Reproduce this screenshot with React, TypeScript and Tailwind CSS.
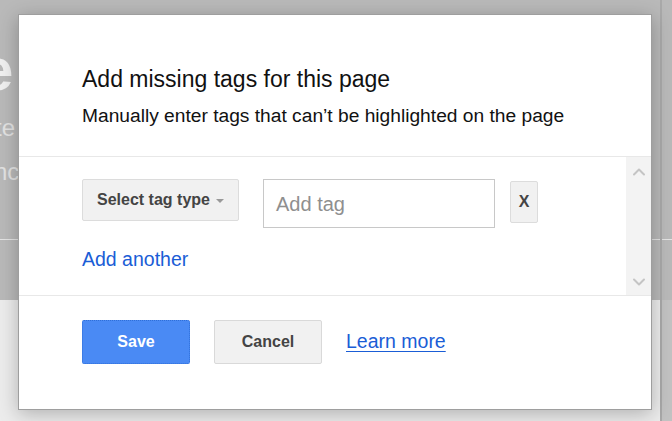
import { ChevronUp, ChevronDown } from 'lucide-react';

const font = { fontFamily: '"Liberation Sans", Arial, sans-serif' };

// 背景页面（被遮罩）
const BackdropPage = () => (
  <div className="absolute inset-0 flex flex-col">
    <div className="h-[300px] bg-[#b9b9b9] flex flex-col">
      <div className="h-[240px] border-b border-[#e4e4e4] pt-[40px]">
        <div className="text-[60px] leading-[60px] font-bold text-[#f0f0f0] -ml-[20px]">e</div>
        <div className="text-[24px] leading-[28px] text-[#e2e2e2] mt-[14px] -ml-[5px]">te</div>
        <div className="text-[24px] leading-[28px] text-[#e2e2e2] mt-[16px] -ml-[6px]">nc</div>
      </div>
      <div className="flex-1" />
    </div>
    <div className="flex-1 bg-[#ececec] flex justify-end">
      <div className="w-[11px] bg-[#c2c2c2]" />
    </div>
  </div>
);

const App = () => {
  return (
    <div className="relative w-[672px] h-[421px] overflow-hidden" style={font}>
      <BackdropPage />
      <div className="absolute right-[10px] top-0 bottom-0 w-[2px] bg-[#a9a9a9]" />

      {/* 弹窗 */}
      <div className="absolute left-[18px] top-[14px] w-[634px] h-[396px] bg-white border border-[#9e9e9e] shadow-[0_4px_18px_rgba(0,0,0,0.25)] flex flex-col">
        {/* 标题 */}
        <div className="pl-[63px] pt-[50px] pb-[29px] border-b border-[#e8e8e8]">
          <h2 className="text-[23px] leading-[28px] text-[#111]">Add missing tags for this page</h2>
          <p className="mt-[12px] text-[19.2px] leading-[22px] text-[#111]">
            Manually enter tags that can’t be highlighted on the page
          </p>
        </div>

        {/* 可滚动区域 */}
        <div className="h-[139px] flex border-b border-[#e8e8e8]">
          <div className="flex-1 pl-[63px] pt-[22px]">
            <div className="flex items-start">
              <button className="h-[42px] w-[157px] rounded-[2px] border border-[#dcdcdc] bg-[#f1f1f1] flex items-center justify-center gap-[6px] text-[16px] font-bold text-[#444]">
                Select tag type
                <span className="w-0 h-0 border-l-[4px] border-r-[4px] border-t-[4px] border-l-transparent border-r-transparent border-t-[#999] mt-[1px]" />
              </button>
              <div className="ml-[24px] h-[49px] w-[232px] border border-[#c8c8c8] flex items-center pl-[12px] text-[20px] text-[#8f8f8f]">
                Add tag
              </div>
              <button className="ml-[15px] mt-[2px] h-[42px] w-[28px] rounded-[2px] border border-[#dcdcdc] bg-[#f1f1f1] flex items-center justify-center text-[16px] font-bold text-[#444]">
                X
              </button>
            </div>
            <div className="mt-[20px] text-[19.5px] leading-[22px] text-[#1a5dd6]">Add another</div>
          </div>
          <div className="w-[25px] bg-[#f3f3f3] flex flex-col items-center justify-between pt-[5px] pb-[3px]">
            <ChevronUp size={20} strokeWidth={2.4} className="text-[#c4c4c4]" />
            <ChevronDown size={20} strokeWidth={2.4} className="text-[#c4c4c4]" />
          </div>
        </div>

        {/* 底部按钮 */}
        <div className="pl-[63px] pt-[24px] flex items-center">
          <button className="h-[44px] w-[108px] rounded-[2px] border border-dotted border-[#2f6fd8] bg-[#4a8af4] text-white text-[16px] font-bold">
            Save
          </button>
          <button className="ml-[24px] h-[44px] w-[108px] rounded-[2px] border border-[#d9d9d9] bg-[#f1f1f1] text-[#444] text-[16px] font-bold">
            Cancel
          </button>
          <a className="ml-[24px] text-[19.5px] text-[#1a5dd6] underline underline-offset-[3px]">Learn more</a>
        </div>
      </div>
    </div>
  );
};

export default App;
